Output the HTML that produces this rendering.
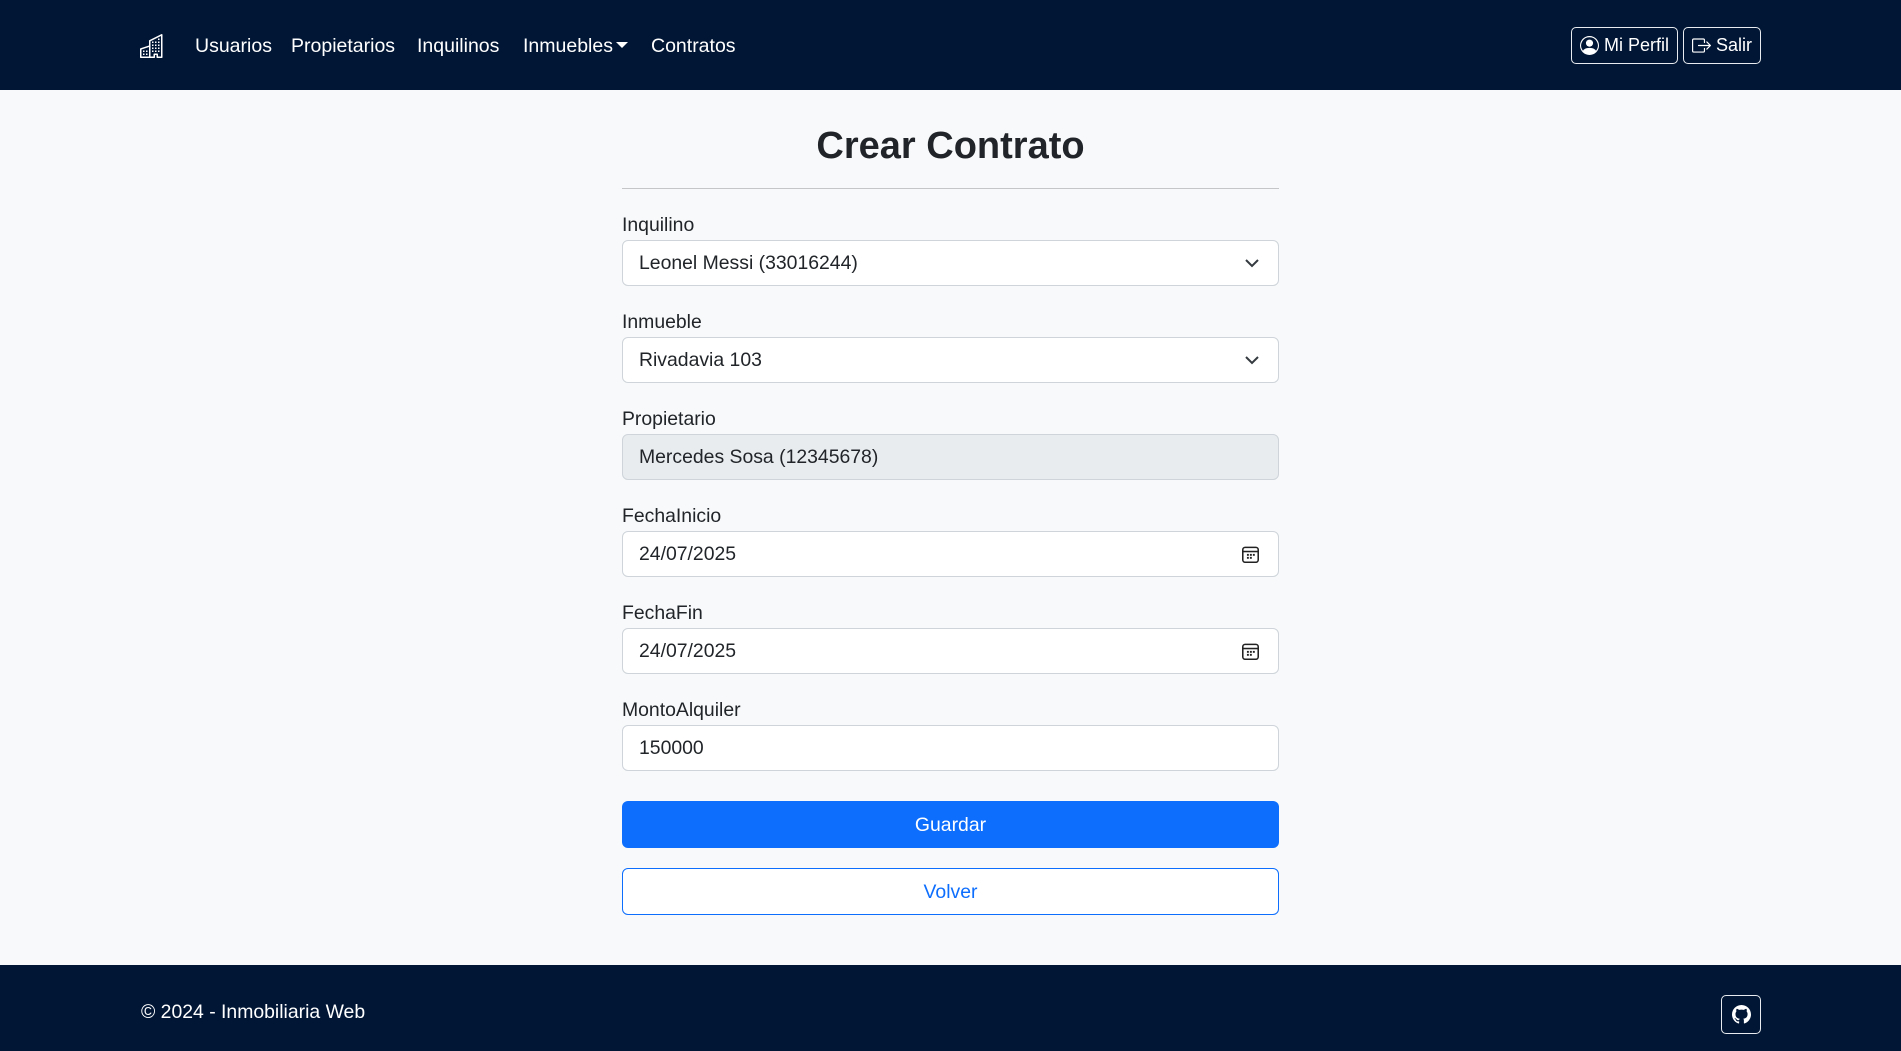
<!DOCTYPE html>
<html><head><meta charset="utf-8"><style>
*{box-sizing:border-box;margin:0;padding:0}
body{width:1901px;height:1051px;overflow:hidden;background:#f8f9fa;font-family:"Liberation Sans",sans-serif;color:#212529;position:relative}
.nav{position:absolute;left:0;top:0;width:1901px;height:90px;background:#011635}
.nav a{position:absolute;top:34px;color:#fff;font-size:19.5px;text-decoration:none;line-height:24px}
.btn{position:absolute;border:1.5px solid #e8ebef;border-radius:5px;color:#fff;font-size:18px;display:flex;align-items:center;justify-content:center;gap:5px}
.lbl{position:absolute;left:622px;font-size:19.4px;line-height:24px}
.inp{position:absolute;left:622px;width:657px;height:46px;border:1px solid #ced4da;border-radius:6px;background:#fff;font-size:19.4px;padding-left:16px;line-height:45px}
.foot{position:absolute;left:0;top:965px;width:1901px;height:86px;background:#011635}
</style></head><body>
<div class="nav">
<svg style="position:absolute;left:140px;top:34px" width="24" height="24" viewBox="0 0 16 16" fill="#fff"><path d="M14.763.075A.5.5 0 0 1 15 .5v15a.5.5 0 0 1-.5.5h-3a.5.5 0 0 1-.5-.5V14h-1v1.5a.5.5 0 0 1-.5.5h-9a.5.5 0 0 1-.5-.5V10a.5.5 0 0 1 .342-.474L6 7.64V4.5a.5.5 0 0 1 .276-.447l8-4a.5.5 0 0 1 .487.022ZM6 8.694 1 10.360V15h5V8.694ZM7 15h2v-1.5a.5.5 0 0 1 .5-.5h2a.5.5 0 0 1 .5.5V15h2V1.309l-7 3.5V15Z"/><path d="M2 11h1v1H2v-1Zm2 0h1v1H4v-1Zm-2 2h1v1H2v-1Zm2 0h1v1H4v-1Zm4-4h1v1H8V9Zm2 0h1v1h-1V9Zm-2 2h1v1H8v-1Zm2 0h1v1h-1v-1Zm2-2h1v1h-1V9Zm0 2h1v1h-1v-1ZM8 7h1v1H8V7Zm2 0h1v1h-1V7Zm2 0h1v1h-1V7ZM8 5h1v1H8V5Zm2 0h1v1h-1V5Zm2 0h1v1h-1V5Zm0-2h1v1h-1V3Z"/></svg>
<a style="left:195px">Usuarios</a>
<a style="left:291px">Propietarios</a>
<a style="left:417px">Inquilinos</a>
<a style="left:523px">Inmuebles<span style="display:inline-block;width:0;height:0;border-left:6px solid transparent;border-right:6px solid transparent;border-top:6px solid #fff;margin-left:3px;vertical-align:4px"></span></a>
<a style="left:651px">Contratos</a>
<div class="btn" style="left:1571px;top:27px;width:107px;height:37px"><svg width="19" height="19" viewBox="0 0 16 16" fill="#fff"><path d="M11 6a3 3 0 1 1-6 0 3 3 0 0 1 6 0z"/><path fill-rule="evenodd" d="M0 8a8 8 0 1 1 16 0A8 8 0 0 1 0 8zm8-7a7 7 0 0 0-5.468 11.37C3.242 11.226 4.805 10 8 10s4.757 1.225 5.468 2.37A7 7 0 0 0 8 1z"/></svg>Mi Perfil</div>
<div class="btn" style="left:1683px;top:27px;width:78px;height:37px"><svg width="19" height="19" viewBox="0 0 16 16" fill="#fff"><path fill-rule="evenodd" d="M10 12.5a.5.5 0 0 1-.5.5h-8a.5.5 0 0 1-.5-.5v-9a.5.5 0 0 1 .5-.5h8a.5.5 0 0 1 .5.5v2a.5.5 0 0 0 1 0v-2A1.5 1.5 0 0 0 9.5 2h-8A1.5 1.5 0 0 0 0 3.5v9A1.5 1.5 0 0 0 1.5 14h8a1.5 1.5 0 0 0 1.5-1.5v-2a.5.5 0 0 0-1 0v2z"/><path fill-rule="evenodd" d="M15.854 8.354a.5.5 0 0 0 0-.708l-3-3a.5.5 0 0 0-.708.708L14.293 7.5H5.5a.5.5 0 0 0 0 1h8.793l-2.147 2.146a.5.5 0 0 0 .708.708l3-3z"/></svg>Salir</div>
</div>
<div style="position:absolute;left:622px;width:657px;top:116px;text-align:center;font-size:38px;font-weight:bold;line-height:60px">Crear Contrato</div>
<div style="position:absolute;left:622px;width:657px;top:188px;height:1px;background:#c4c6c8"></div>
<div class="lbl" style="top:213px">Inquilino</div>
<div class="inp" style="top:240px">Leonel Messi (33016244)<svg style="position:absolute;right:18px;top:16px" width="16" height="12" viewBox="0 0 16 12"><path d="M2 3l6 6 6-6" fill="none" stroke="#343a40" stroke-width="2"/></svg></div>
<div class="lbl" style="top:310px">Inmueble</div>
<div class="inp" style="top:337px">Rivadavia 103<svg style="position:absolute;right:18px;top:16px" width="16" height="12" viewBox="0 0 16 12"><path d="M2 3l6 6 6-6" fill="none" stroke="#343a40" stroke-width="2"/></svg></div>
<div class="lbl" style="top:407px">Propietario</div>
<div class="inp" style="top:434px;background:#e9ecef">Mercedes Sosa (12345678)</div>
<div class="lbl" style="top:504px">FechaInicio</div>
<div class="inp" style="top:531px">24/07/2025<svg style="position:absolute;right:18px;top:13px" width="19" height="19" viewBox="0 0 16 16"><rect x="1.5" y="2" width="13" height="12.5" rx="2" fill="none" stroke="#222" stroke-width="1.3"/><path d="M1.5 5.5h13" stroke="#222" stroke-width="1.3"/><g fill="#222"><rect x="5" y="7.5" width="1.6" height="1.6"/><rect x="7.5" y="7.5" width="1.6" height="1.6"/><rect x="10" y="7.5" width="1.6" height="1.6"/><rect x="5" y="10" width="1.6" height="1.6"/><rect x="7.5" y="10" width="1.6" height="1.6"/></g></svg></div>
<div class="lbl" style="top:601px">FechaFin</div>
<div class="inp" style="top:628px">24/07/2025<svg style="position:absolute;right:18px;top:13px" width="19" height="19" viewBox="0 0 16 16"><rect x="1.5" y="2" width="13" height="12.5" rx="2" fill="none" stroke="#222" stroke-width="1.3"/><path d="M1.5 5.5h13" stroke="#222" stroke-width="1.3"/><g fill="#222"><rect x="5" y="7.5" width="1.6" height="1.6"/><rect x="7.5" y="7.5" width="1.6" height="1.6"/><rect x="10" y="7.5" width="1.6" height="1.6"/><rect x="5" y="10" width="1.6" height="1.6"/><rect x="7.5" y="10" width="1.6" height="1.6"/></g></svg></div>
<div class="lbl" style="top:698px">MontoAlquiler</div>
<div class="inp" style="top:725px">150000</div>
<div style="position:absolute;left:622px;top:801px;width:657px;height:47px;background:#0d6efd;border-radius:6px;color:#fff;font-size:19.4px;text-align:center;line-height:48px">Guardar</div>
<div style="position:absolute;left:622px;top:868px;width:657px;height:47px;border:1px solid #0d6efd;border-radius:6px;color:#0d6efd;font-size:19.4px;text-align:center;line-height:46px;background:#fff">Volver</div>
<div class="foot">
<div style="position:absolute;left:141px;top:35px;color:#fff;font-size:19.4px;line-height:24px">© 2024 - Inmobiliaria Web</div>
<div class="btn" style="left:1721px;top:30px;width:40px;height:39px"><svg width="19" height="19" viewBox="0 0 16 16" fill="#fff"><path d="M8 0C3.58 0 0 3.58 0 8c0 3.540 2.29 6.530 5.47 7.590.4.07.55-.17.55-.38 0-.19-.01-.82-.01-1.490-2.010.37-2.530-.49-2.690-.94-.09-.23-.48-.94-.82-1.130-.28-.15-.68-.52-.01-.53.63-.01 1.080.58 1.230.82.72 1.210 1.870.87 2.330.66.07-.52.28-.87.51-1.070-1.780-.2-3.640-.89-3.640-3.950 0-.87.31-1.590.82-2.150-.08-.2-.36-1.020.08-2.120 0 0 .67-.21 2.200.82.64-.18 1.320-.27 2-.27.68 0 1.360.09 2 .27 1.530-1.040 2.200-.82 2.200-.82.44 1.100.16 1.920.08 2.120.51.56.82 1.270.82 2.150 0 3.070-1.870 3.750-3.650 3.950.29.25.54.73.54 1.480 0 1.070-.01 1.930-.01 2.200 0 .21.15.46.55.38A8.012 8.012 0 0 0 16 8c0-4.420-3.580-8-8-8z"/></svg></div>
</div>
</body></html>
